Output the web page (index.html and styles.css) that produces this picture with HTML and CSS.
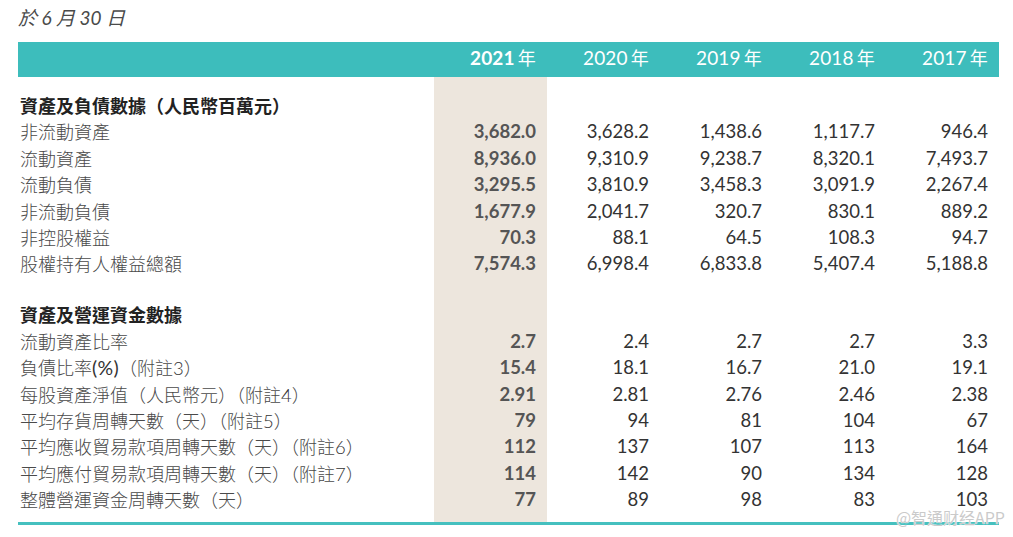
FILE: index.html
```html
<!DOCTYPE html>
<html lang="zh-Hant">
<head>
<meta charset="utf-8">
<title>財務摘要</title>
<link rel="stylesheet" href="styles.css">
</head>
<body>
<div class="page">
  <div class="title">於 6 月 30 日</div>
  <table class="fin">
    <colgroup>
      <col class="c-label">
      <col class="c-hl">
      <col class="c-yr">
      <col class="c-yr">
      <col class="c-yr">
      <col class="c-yr">
    </colgroup>
    <thead>
      <tr class="head">
        <th></th>
        <th class="cur">2021<span class="nian">年</span></th>
        <th>2020<span class="nian">年</span></th>
        <th>2019<span class="nian">年</span></th>
        <th>2018<span class="nian">年</span></th>
        <th>2017<span class="nian">年</span></th>
      </tr>
    </thead>
    <tbody>
      <tr class="gap1"><td></td><td></td><td></td><td></td><td></td><td></td></tr>
      <tr class="sec"><td>資產及負債數據（人民幣百萬元）</td><td></td><td></td><td></td><td></td><td></td></tr>
      <tr><td>非流動資產</td><td class="cur">3,682.0</td><td>3,628.2</td><td>1,438.6</td><td>1,117.7</td><td>946.4</td></tr>
      <tr><td>流動資產</td><td class="cur">8,936.0</td><td>9,310.9</td><td>9,238.7</td><td>8,320.1</td><td>7,493.7</td></tr>
      <tr><td>流動負債</td><td class="cur">3,295.5</td><td>3,810.9</td><td>3,458.3</td><td>3,091.9</td><td>2,267.4</td></tr>
      <tr><td>非流動負債</td><td class="cur">1,677.9</td><td>2,041.7</td><td>320.7</td><td>830.1</td><td>889.2</td></tr>
      <tr><td>非控股權益</td><td class="cur">70.3</td><td>88.1</td><td>64.5</td><td>108.3</td><td>94.7</td></tr>
      <tr><td>股權持有人權益總額</td><td class="cur">7,574.3</td><td>6,998.4</td><td>6,833.8</td><td>5,407.4</td><td>5,188.8</td></tr>
      <tr class="gap2"><td></td><td></td><td></td><td></td><td></td><td></td></tr>
      <tr class="sec"><td>資產及營運資金數據</td><td></td><td></td><td></td><td></td><td></td></tr>
      <tr><td>流動資產比率</td><td class="cur">2.7</td><td>2.4</td><td>2.7</td><td>2.7</td><td>3.3</td></tr>
      <tr><td>負債比率<span class="lat pct">(%)</span>（附註<span class="lat">3</span>）</td><td class="cur">15.4</td><td>18.1</td><td>16.7</td><td>21.0</td><td>19.1</td></tr>
      <tr><td>每股資產淨值（人民幣元）（附註<span class="lat">4</span>）</td><td class="cur">2.91</td><td>2.81</td><td>2.76</td><td>2.46</td><td>2.38</td></tr>
      <tr><td>平均存貨周轉天數（天）（附註<span class="lat">5</span>）</td><td class="cur">79</td><td>94</td><td>81</td><td>104</td><td>67</td></tr>
      <tr><td>平均應收貿易款項周轉天數（天）（附註<span class="lat">6</span>）</td><td class="cur">112</td><td>137</td><td>107</td><td>113</td><td>164</td></tr>
      <tr><td>平均應付貿易款項周轉天數（天）（附註<span class="lat">7</span>）</td><td class="cur">114</td><td>142</td><td>90</td><td>134</td><td>128</td></tr>
      <tr><td>整體營運資金周轉天數（天）</td><td class="cur">77</td><td>89</td><td>98</td><td>83</td><td>103</td></tr>
      <tr class="gap3"><td></td><td></td><td></td><td></td><td></td><td></td></tr>
    </tbody>
  </table>
  <div class="watermark">@智通财经APP</div>
</div>
</body>
</html>
```
FILE: styles.css
```css
html, body {
  margin: 0;
  padding: 0;
  background: #ffffff;
}

body {
  font-family: "Lato", "Noto Sans CJK TC", sans-serif;
  color: #3a3a3a;
}

.page {
  position: relative;
  width: 1013px;
  height: 537px;
  padding: 0 15px 0 18px;
  box-sizing: border-box;
}

.title {
  padding-top: 4px;
  height: 27px;
  line-height: 27px;
  margin-bottom: 11px;
  font-family: "Lato", "Noto Sans CJK TC", sans-serif;
  font-style: italic;
  font-size: 19px;
  color: #4a4a4a;
}

.fin {
  width: 980px;
  table-layout: fixed;
  border-collapse: separate;
  border-spacing: 0;
  border-bottom: 3px solid #45c0bf;
}

.c-label { width: 416px; }
.c-hl { width: 113px; background: #ede6dd; }
.c-yr { width: 113px; }

.head {
  background: #3dbdbc;
}

.head th {
  height: 35px;
  line-height: 32px;
  padding: 0 11px 0 0;
  text-align: right;
  font-weight: 400;
  font-size: 19px;
  color: #ffffff;
  letter-spacing: 0.2px;
  vertical-align: top;
}

.head th.cur {
  font-weight: 700;
}

.nian {
  font-family: "Noto Sans CJK TC", sans-serif;
  font-weight: 400;
  font-size: 18px;
  line-height: 1;
  margin-left: 3px;
}

.fin td {
  height: 26.4px;
  line-height: 26.4px;
  padding: 0 11px 0 0;
  text-align: right;
  font-size: 18.5px;
  color: #333333;
  white-space: nowrap;
  vertical-align: middle;
}

.fin td:first-child {
  text-align: left;
  padding: 0 0 0 2px;
  font-family: "Noto Sans CJK TC", sans-serif;
  font-size: 18px;
  color: #4a4a4a;
  font-weight: 300;
}

.fin td.cur {
  font-weight: 700;
  color: #555555;
}

.fin tr.sec td:first-child {
  font-weight: 700;
  color: #222222;
}

.lat {
  font-family: "Lato", sans-serif;
  font-size: 18.5px;
  line-height: 1;
  color: #333333;
}

.lat.pct {
  font-size: 19.5px;
  font-weight: 400;
  letter-spacing: 0.3px;
}

.fin tr.gap1 td { height: 15px; line-height: 0; font-size: 0; }
.fin tr.gap2 td { height: 24.5px; line-height: 0; font-size: 0; }
.fin tr.gap3 td { height: 9px; line-height: 0; font-size: 0; }

.watermark {
  position: absolute;
  right: 8px;
  top: 508px;
  font-family: "Noto Sans CJK SC", sans-serif;
  font-size: 16px;
  line-height: 18px;
  color: rgba(185, 185, 185, 0.75);
  text-shadow: 0 0 1px #ffffff, 0 0 1px #ffffff;
}
```
